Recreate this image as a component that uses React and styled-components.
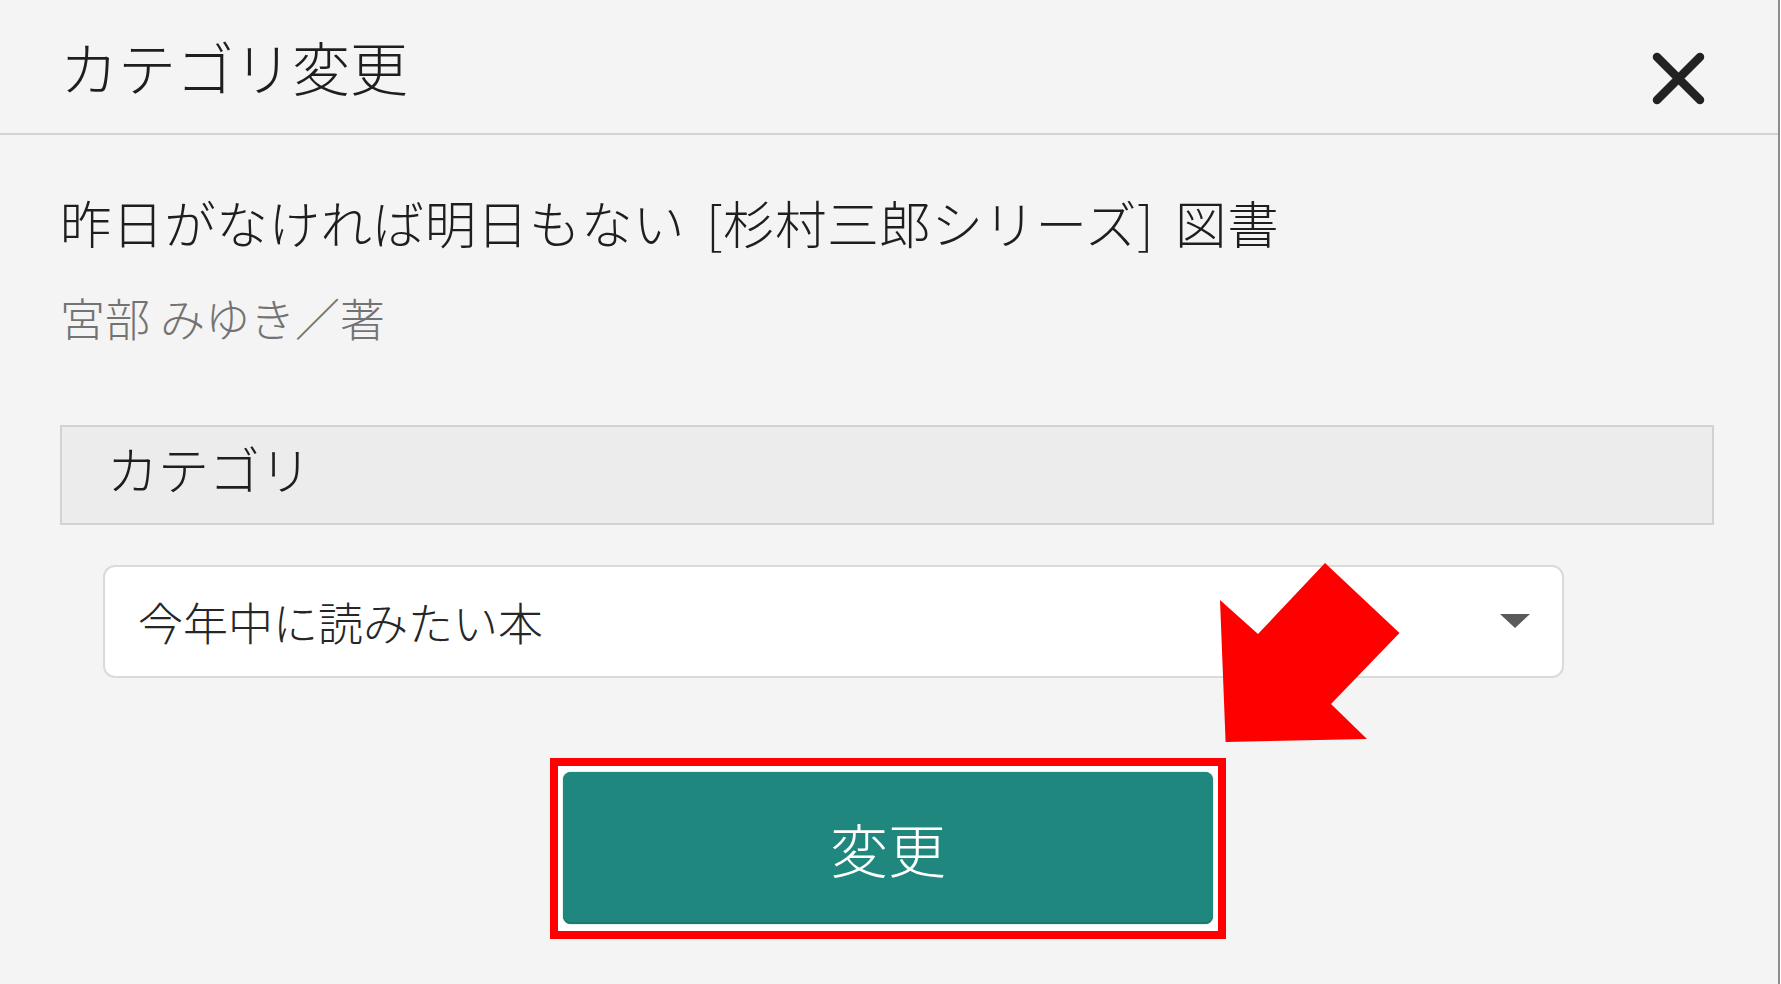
import React from "react";
import styled, { createGlobalStyle } from "styled-components";

const Global = createGlobalStyle`
  html, body { margin: 0; padding: 0; background: #ffffff; }
  body { font-family: "Noto Sans CJK JP", "Noto Sans", sans-serif; font-weight: 300; }
  * { box-sizing: border-box; }
`;

const Panel = styled.div`
  position: relative;
  width: 1780px;
  height: 984px;
  background: #f4f4f4;
  border-right: 2px solid #8c8c8c;
  display: flex;
  flex-direction: column;
  overflow: hidden;
`;

const Header = styled.header`
  height: 135px;
  flex: none;
  display: flex;
  align-items: center;
  justify-content: space-between;
  padding: 0 73px 0 60px;
  border-bottom: 2px solid #d3d3d3;
`;

const Title = styled.h1`
  margin: -2px 0 0;
  font-size: 58px;
  line-height: 1;
  font-weight: 300;
  color: #1e1e1e;
`;

const CloseButton = styled.button`
  border: 0;
  background: none;
  padding: 0;
  margin-top: 24px;
  width: 53px;
  height: 53px;
  cursor: pointer;
  display: block;
`;

const Body = styled.div`
  padding: 0 64px 0 60px;
  display: flex;
  flex-direction: column;
`;

const BookTitle = styled.div`
  margin-top: 61px;
  font-size: 51.5px;
  letter-spacing: 0.6px;
  word-spacing: 9px;
  line-height: 1;
  color: #1e1e1e;
  white-space: nowrap;
`;

const Author = styled.div`
  margin-top: 47px;
  font-size: 45px;
  line-height: 1;
  color: #737373;
`;

const SectionHead = styled.div`
  margin-top: 85px;
  height: 100px;
  background: #ececec;
  border: 2px solid #d2d2d2;
  padding: 16px 0 0 45px;
  font-size: 51px;
  line-height: 1;
  color: #1e1e1e;
`;

const SelectBox = styled.div`
  margin: 40px 0 0 43px;
  width: 1461px;
  height: 113px;
  background: #fff;
  border: 2px solid #dadada;
  border-radius: 12px;
  display: flex;
  align-items: center;
  justify-content: space-between;
  padding: 0 32px 0 33px;
  font-size: 45px;
  line-height: 1;
  color: #262626;
`;

const Caret = styled.svg`
  width: 30px;
  height: 14px;
  display: block;
  margin-top: 0;
`;

const ActionRow = styled.div`
  margin-top: 80px;
  display: flex;
  justify-content: center;
`;

const Highlight = styled.div`
  border: 8px solid #ff0000;
  background: #ffffff;
  padding: 6px 5px 7px 5px;
  margin-left: 2px;
`;

const SubmitButton = styled.button`
  width: 650px;
  height: 152px;
  border: 0;
  border-radius: 8px;
  background: #20877f;
  box-shadow: inset 0 -2px 0 #1a7a72, 0 0 1px #1a7a72;
  color: #fff;
  font-family: "Noto Sans CJK JP", "Noto Sans", sans-serif;
  font-weight: 300;
  font-size: 58px;
  line-height: 1;
  cursor: pointer;
`;

const Arrow = styled.svg`
  position: absolute;
  left: 1210px;
  top: 555px;
  width: 200px;
  height: 195px;
`;

export default function App() {
  return (
    <>
      <Global />
      <Panel>
        <Header>
          <Title>カテゴリ変更</Title>
          <CloseButton aria-label="閉じる">
            <svg width="53" height="53" viewBox="0 0 53 53">
              <path
                d="M5 5 L48 48 M48 5 L5 48"
                stroke="#222"
                strokeWidth="8.5"
                strokeLinecap="round"
                fill="none"
              />
            </svg>
          </CloseButton>
        </Header>
        <Body>
          <BookTitle>昨日がなければ明日もない [杉村三郎シリーズ] 図書</BookTitle>
          <Author>宮部 みゆき／著</Author>
          <SectionHead>カテゴリ</SectionHead>
          <SelectBox>
            <span>今年中に読みたい本</span>
            <Caret viewBox="0 0 30 14">
              <polygon points="0,0 30,0 15,14" fill="#5a5a5a" />
            </Caret>
          </SelectBox>
          <ActionRow>
            <Highlight>
              <SubmitButton>変更</SubmitButton>
            </Highlight>
          </ActionRow>
        </Body>
        <Arrow viewBox="0 0 200 195">
          <polygon
            points="115,8 189.5,78 121,149 157,184 15.6,187 10,45 48,79"
            fill="#ff0000"
          />
        </Arrow>
      </Panel>
    </>
  );
}
